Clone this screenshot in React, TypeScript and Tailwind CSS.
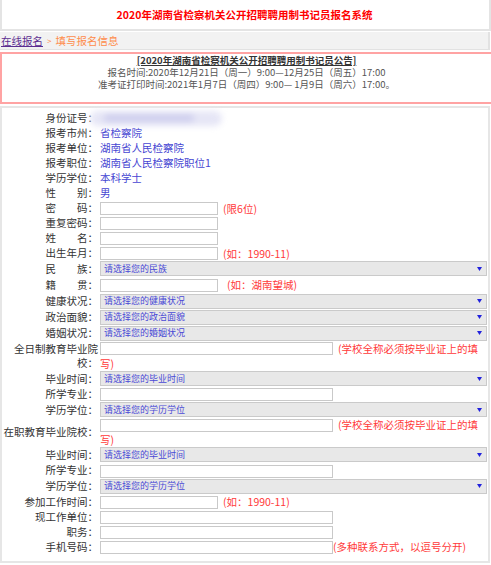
import React from "react";

const font = "font-['Noto_Sans_CJK_SC','Noto_Sans',sans-serif]";

function Label({ children }: { children: React.ReactNode }) {
  return <div className="w-[96px] shrink-0 text-right text-[#333] leading-[14px]">{children}</div>;
}

function Row({ h, label, children }: { h: string; label: React.ReactNode; children?: React.ReactNode }) {
  return (
    <div className={`flex items-center ${h}`}>
      <Label>{label}</Label>
      <div className="ml-[2px] w-[387px] leading-[14px]">{children}</div>
    </div>
  );
}

function Field({ w = "w-[118px]" }: { w?: string }) {
  return <input readOnly className={`inline-block align-middle ${w} h-[13px] border border-[#c9c9c9] bg-white`} />;
}

function Hint({ children, cls = "ml-[5px]" }: { children: React.ReactNode; cls?: string }) {
  return <span className={`${cls} text-[#ff3a3a] align-middle`}>{children}</span>;
}

function Pick({ text }: { text: string }) {
  return (
    <div className="flex h-[15px] w-[387px] items-center justify-between border border-[#cacaca] bg-[#e8e8e8] pl-[3px] pr-[4px] text-[9px] text-[#4a4ad6]">
      <span>{text}</span>
      <svg width="5" height="4" viewBox="0 0 5 4">
        <path d="M0 0H5L2.5 4Z" fill="#2222dd" />
      </svg>
    </div>
  );
}

const blue = "text-[#4646d2]";

export default function App() {
  return (
    <div className={`w-[491px] h-[565px] overflow-hidden bg-white text-[10.5px] ${font}`}>
      {/* header */}
      <div className="flex h-[31px] w-[491px] items-center justify-center border-x-2 border-b-2 border-[#e4e4e4] pr-[2px]">
        <span className="text-[10.5px] font-bold text-[#ff0000]">2020年湖南省检察机关公开招聘聘用制书记员报名系统</span>
      </div>

      {/* breadcrumb */}
      <div className="mt-[1px] flex h-[18px] w-[490px] items-center border-r-2 border-b border-[#e2e2e2] bg-[#f2f2f2] pl-[1px]">
        <a className="text-[#5b2d90] underline">在线报名</a>
        <span className="mx-[4px] text-[8px] text-[#ff8c4a]">&gt;</span>
        <span className="text-[#ff8c4a]">填写报名信息</span>
      </div>

      {/* notice */}
      <div className="mt-[2px] h-[52px] w-[493px] border-2 border-[#ffa3a3] text-center text-[9.5px] leading-[12px] text-[#555]">
        <div className="font-bold text-[#333] underline">[2020年湖南省检察机关公开招聘聘用制书记员公告]</div>
        <div>报名时间:2020年12月21日（周一）9:00—12月25日（周五）17:00</div>
        <div>准考证打印时间:2021年1月7日（周四）9:00— 1月9日（周六）17:00。</div>
      </div>

      {/* form */}
      <div className="mt-[2px] h-[457px] w-[490px] border-2 border-[#e6e6e6] pt-[2.5px]">
        <Row h="h-[15px]" label="身份证号：">
          <div className="-ml-[10px] flex h-[15px] w-[132px] items-center rounded-full bg-[#e6e6f6] blur-[3px]">
            <div className="ml-[14px] h-[8px] w-[90px] rounded-full bg-[#cfcfee]" />
          </div>
        </Row>
        <Row h="h-[15px]" label="报考市州：">
          <span className={blue}>省检察院</span>
        </Row>
        <Row h="h-[15px]" label="报考单位：">
          <span className={blue}>湖南省人民检察院</span>
        </Row>
        <Row h="h-[15px]" label="报考职位：">
          <span className={blue}>湖南省人民检察院职位1</span>
        </Row>
        <Row h="h-[15px]" label="学历学位：">
          <span className={blue}>本科学士</span>
        </Row>
        <Row h="h-[15px]" label="性　　别：">
          <span className={blue}>男</span>
        </Row>
        <Row h="h-[15px]" label="密　　码：">
          <Field />
          <Hint>(限6位)</Hint>
        </Row>
        <Row h="h-[15px]" label="重复密码：">
          <Field />
        </Row>
        <Row h="h-[15px]" label="姓　　名：">
          <Field />
        </Row>
        <Row h="h-[15px]" label="出生年月：">
          <Field />
          <Hint>(如：1990-11)</Hint>
        </Row>
        <Row h="h-[16px]" label="民　　族：">
          <Pick text="请选择您的民族" />
        </Row>
        <Row h="h-[16.5px]" label="籍　　贯：">
          <Field />
          <Hint cls="ml-[9px]">(如：湖南望城)</Hint>
        </Row>
        <Row h="h-[16px]" label="健康状况：">
          <Pick text="请选择您的健康状况" />
        </Row>
        <Row h="h-[16px]" label="政治面貌：">
          <Pick text="请选择您的政治面貌" />
        </Row>
        <Row h="h-[16px]" label="婚姻状况：">
          <Pick text="请选择您的婚姻状况" />
        </Row>
        <Row h="h-[29.5px]" label="全日制教育毕业院校：">
          <Field w="w-[233px]" />
          <Hint>(学校全称必须按毕业证上的填写)</Hint>
        </Row>
        <Row h="h-[16px]" label="毕业时间：">
          <Pick text="请选择您的毕业时间" />
        </Row>
        <Row h="h-[15px]" label="所学专业：">
          <Field w="w-[233px]" />
        </Row>
        <Row h="h-[16px]" label="学历学位：">
          <Pick text="请选择您的学历学位" />
        </Row>
        <Row h="h-[29px]" label="在职教育毕业院校：">
          <Field w="w-[233px]" />
          <Hint>(学校全称必须按毕业证上的填写)</Hint>
        </Row>
        <Row h="h-[16px]" label="毕业时间：">
          <Pick text="请选择您的毕业时间" />
        </Row>
        <Row h="h-[15.5px]" label="所学专业：">
          <Field w="w-[233px]" />
        </Row>
        <Row h="h-[16px]" label="学历学位：">
          <Pick text="请选择您的学历学位" />
        </Row>
        <Row h="h-[15.5px]" label="参加工作时间：">
          <Field />
          <Hint>(如：1990-11)</Hint>
        </Row>
        <Row h="h-[15px]" label="现工作单位：">
          <Field w="w-[233px]" />
        </Row>
        <Row h="h-[15px]" label="职务：">
          <Field w="w-[233px]" />
        </Row>
        <Row h="h-[15px]" label="手机号码：">
          <Field w="w-[233px]" />
          <Hint cls="ml-0">(多种联系方式，以逗号分开)</Hint>
        </Row>
      </div>
    </div>
  );
}
